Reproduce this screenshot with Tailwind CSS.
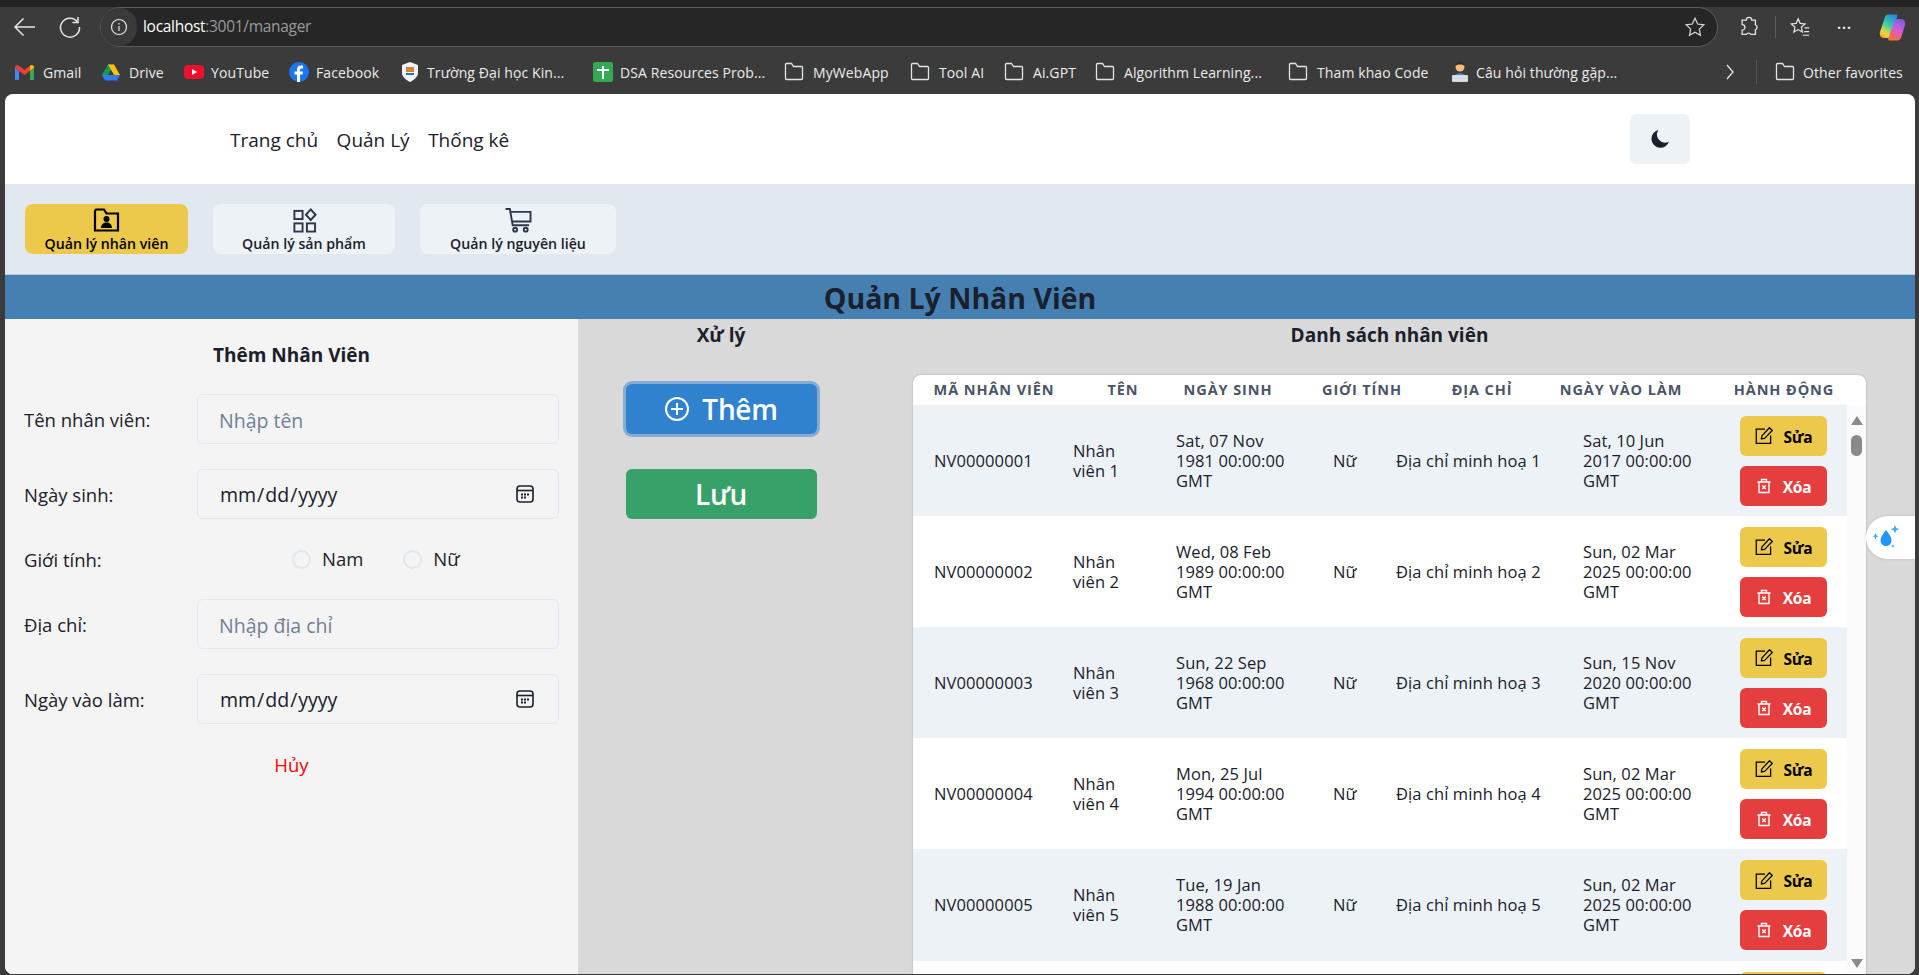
<!DOCTYPE html>
<html lang="vi">

<head>
  <meta charset="UTF-8" />
  <meta name="viewport" content="width=device-width, initial-scale=1.0" />
  <script src="https://cdn.jsdelivr.net/npm/@tailwindcss/browser@4"></script>
  <title>Quản lý nhân viên</title>
</head>

<body class="h-screen overflow-hidden bg-[#3b3b3b] font-['Open_Sans','Noto_Sans',sans-serif]">
  <!-- icon sheet -->
  <svg class="hidden">
    <symbol id="folder" viewBox="0 0 22 22">
      <path d="M2.500 6V3.500a1 1 0 0 1 1-1h5l2 3h8a1 1 0 0 1 1 1v11a1 1 0 0 1-1 1h-15a1 1 0 0 1-1-1z" fill="none" stroke="#e4e4e4" stroke-width="1.300" />
    </symbol>
    <symbol id="edit" viewBox="0 0 18 18">
      <path d="M9.500 3H1.200v13.500h13.600V9" fill="none" stroke="currentColor" stroke-width="1.200" />
      <path d="M6 12.300l.6-3L13.700 1.700l2.700 2.500-7.300 7.500z" fill="none" stroke="currentColor" stroke-width="1.200" stroke-linejoin="round" />
    </symbol>
    <symbol id="trash" viewBox="0 0 16 16">
      <path d="M1.500 4h13M5.500 4V1.500h5V4M3 4v10.500h10V4" fill="none" stroke="currentColor" stroke-width="1.400" />
      <path d="M6.300 7.500l3.400 3.400M9.700 7.500l-3.400 3.400" stroke="currentColor" stroke-width="1.400" />
    </symbol>
    <symbol id="calendar" viewBox="0 0 18 18">
      <rect x="1" y="1" width="16" height="16" rx="3" fill="none" stroke="#1a202c" stroke-width="1.600" />
      <path d="M1 5.500h16" stroke="#1a202c" stroke-width="1.600" />
      <path d="M5 8.500h2v2H5zM8 8.500h2v2H8zM11 8.500h2v2h-2zM5 11.500h2v2H5zM8 11.500h2v2H8z" fill="#1a202c" />
    </symbol>
  </svg>

  <!-- browser bar -->
  <header class="h-[94px] text-[#e8e8e8]">
    <div class="h-[7px] bg-[#232323]"></div>
    <div class="h-[40px] flex items-center">
      <div class="w-[100px] flex items-center pl-[13px] gap-[21px]">
        <svg class="w-[24px] h-[24px]" viewBox="0 0 24 24" fill="none" stroke="#e6e6e6" stroke-width="1.500">
          <path d="M22 12H2M10.500 3.500L2 12l8.500 8.500" />
        </svg>
        <svg class="w-[24px] h-[24px]" viewBox="0 0 24 24" fill="none" stroke="#e6e6e6" stroke-width="1.500">
          <path d="M19.500 6.800A9.500 9.500 0 1 0 21.500 12" />
          <path d="M20 2v5.500h-5.500" />
        </svg>
      </div>
      <div class="w-[1618px] h-[40px] rounded-full border border-[#5c5c5c] bg-[#262626] flex items-center relative">
        <div class="w-[36px] h-[38px] rounded-full bg-[#3a3a3a] flex items-center justify-center">
          <svg class="w-[18px] h-[18px]" viewBox="0 0 18 18" fill="none" stroke="#e6e6e6" stroke-width="1.200">
            <circle cx="9" cy="9" r="7.500" />
            <path d="M9 8v5M9 5v1.500" />
          </svg>
        </div>
        <div class="ml-[6px] text-[15.500px] tracking-[-0.3px]"><span class="text-white">localhost</span><span class="text-[#9a9a9a]">:3001/manager</span></div>
        <svg class="w-[22px] h-[22px] ml-auto mr-[11px]" viewBox="0 0 24 24" fill="none" stroke="#d6d6d6" stroke-width="1.300">
          <path d="M12 2.500l2.900 6.300 6.800.8-5 4.700 1.300 6.800-6-3.400-6 3.400 1.300-6.800-5-4.700 6.800-.8z" />
        </svg>
      </div>
      <div class="flex-1 flex items-center pl-[20px]">
        <svg class="w-[22px] h-[22px]" viewBox="0 0 24 24" fill="none" stroke="#e6e6e6" stroke-width="1.400">
          <path d="M9 4.500a3 3 0 0 1 6 0h4v5a3 3 0 0 1 0 5.500v5h-5a3 3 0 0 0-5 0H4.500v-4.500a3 3 0 0 0 0-6V4.500z" />
        </svg>
        <div class="w-px h-[22px] bg-[#5c5c5c] ml-[15px]"></div>
        <svg class="w-[22px] h-[22px] ml-[13px]" viewBox="0 0 24 24" fill="none" stroke="#e6e6e6" stroke-width="1.300">
          <path d="M10 3l2.200 5 5.300.6-4 3.600 1.100 5.300-4.600-2.700-4.600 2.700 1.100-5.300-4-3.600 5.300-.6z" />
          <path d="M17 13h5M16.500 17h5.500M15 21h7" />
        </svg>
        <div class="ml-[26px] text-[14px] font-bold leading-none tracking-[1px] -mt-[6px]">...</div>
        <svg class="w-[27px] h-[27px] ml-[27px]" viewBox="0 0 27 27">
          <defs>
            <linearGradient id="cp1" x1="0.7" y1="0" x2="0.2" y2="1">
              <stop offset="0" stop-color="#1f8de6" />
              <stop offset=".45" stop-color="#3fcf9a" />
              <stop offset=".8" stop-color="#f2d53c" />
              <stop offset="1" stop-color="#f2a93c" />
            </linearGradient>
            <linearGradient id="cp2" x1="0.7" y1="0" x2="0.3" y2="1">
              <stop offset="0" stop-color="#7a5ae8" />
              <stop offset=".5" stop-color="#d45fd0" />
              <stop offset=".8" stop-color="#f0607a" />
              <stop offset="1" stop-color="#f07a2c" />
            </linearGradient>
          </defs>
          <path d="M9 .5h8c1 0 1.500.8 1.200 1.800L13 21c-.6 2-2 3-4 3H5c-3 0-5-3-4-6L6 3c.4-1.500 1.500-2.500 3-2.500z" fill="url(#cp1)" />
          <path d="M19 5h3c3 0 5 3 4 6l-4 13c-.5 1.500-2 2.500-3.500 2.500h-8c-1 0-1.500-.8-1.200-1.800L15 8c.5-2 2-3 4-3z" fill="url(#cp2)" />
        </svg>
      </div>
    </div>
    <div class="h-[47px] flex items-center pt-[3px] text-[14px] tracking-[0.1px] text-[#ececec] pl-[15px] whitespace-nowrap">
      <a class="w-[87px] flex items-center gap-[9px]">
        <svg class="w-[19px] h-[15px] shrink-0" viewBox="0 0 19 15">
          <path d="M0 2.500V15h4V6z" fill="#4285f4" />
          <path d="M15 6v9h4V2.500z" fill="#34a853" />
          <path d="M0 2.500C0 .3 2.500-.6 4 .7L9.500 5 15 .7c1.500-1.300 4-.4 4 1.800L15 6 9.500 10 4 6z" fill="#ea4335" />
          <path d="M15 .7c1.500-1.300 4-.4 4 1.800L15 6z" fill="#fbbc04" />
        </svg>
        Gmail
      </a>
      <a class="w-[82px] flex items-center gap-[9px]">
        <svg class="w-[18px] h-[17px] shrink-0" viewBox="0 0 18 16">
          <path d="M6 0h6l-6 10.500H0z" fill="#0f9d58" />
          <path d="M12 0l6 10.500h-6L6 0z" fill="#ffc107" />
          <path d="M0 10.500h18L15 16H3z" fill="#2f7bf0" />
        </svg>
        Drive
      </a>
      <a class="w-[105px] flex items-center gap-[7px]">
        <svg class="w-[20px] h-[14px] shrink-0" viewBox="0 0 20 14">
          <rect width="20" height="14" rx="4" fill="#f00f2f" />
          <path d="M8 4l5 3-5 3z" fill="#fff" />
        </svg>
        YouTube
      </a>
      <a class="w-[113px] flex items-center gap-[7px]">
        <svg class="w-[20px] h-[20px] shrink-0" viewBox="0 0 20 20">
          <circle cx="10" cy="10" r="10" fill="#1877f2" />
          <path d="M11 20v-7.500h2.500L14 9.500h-3V8c0-1 .5-1.600 1.700-1.600H14V3.700c-.7-.1-1.400-.2-2-.2-2.400 0-4 1.400-4 4v2H5.500v3H8V20z" fill="#fff" />
        </svg>
        Facebook
      </a>
      <a class="w-[191px] flex items-center gap-[10px]">
        <svg class="w-[16px] h-[20px] -mr-[1px] shrink-0" viewBox="0 0 16 20">
          <path d="M8 0l8 3v8c0 4-4 7-8 9-4-2-8-5-8-9V3z" fill="#eef3fa" />
          <rect x="4" y="5" width="8" height="5" fill="#d9812e" />
          <rect x="4" y="11" width="8" height="2" fill="#2d6fb5" />
        </svg>
        Trường Đại học Kin...
      </a>
      <a class="w-[189.500px] flex items-center gap-[7px]">
        <svg class="w-[20px] h-[20px] shrink-0" viewBox="0 0 20 20">
          <rect width="20" height="20" rx="2" fill="#34a853" />
          <path d="M9 4h2v3h5v2h-5v8H9V9H4V7h5z" fill="#fff" />
        </svg>
        DSA Resources Prob...
      </a>
      <a class="w-[126px] flex items-center gap-[8.500px]"><svg class="w-[22px] h-[22px] shrink-0"><use href="#folder" /></svg>MyWebApp</a>
      <a class="w-[94px] flex items-center gap-[8.500px]"><svg class="w-[22px] h-[22px] shrink-0"><use href="#folder" /></svg>Tool AI</a>
      <a class="w-[91px] flex items-center gap-[8.500px]"><svg class="w-[22px] h-[22px] shrink-0"><use href="#folder" /></svg>Ai.GPT</a>
      <a class="w-[193px] flex items-center gap-[8.500px]"><svg class="w-[22px] h-[22px] shrink-0"><use href="#folder" /></svg>Algorithm Learning...</a>
      <a class="w-[163.500px] flex items-center gap-[8.500px]"><svg class="w-[22px] h-[22px] shrink-0"><use href="#folder" /></svg>Tham khao Code</a>
      <a class="w-[276px] flex items-center gap-[6px]">
        <svg class="w-[20px] h-[22px] shrink-0" viewBox="0 0 20 22">
          <circle cx="10" cy="6" r="4.500" fill="#f4bd7e" />
          <path d="M5.500 5c0-3 2-4.500 4.500-4.500S14.500 2 14.500 5c-1-1-2-1.500-4.500-1.500S6.500 4 5.500 5z" fill="#3a2a1f" />
          <path d="M3 20c0-5 3-8 7-8s7 3 7 8z" fill="#4a7fc1" />
          <rect x="2" y="14" width="16" height="7" rx="1" fill="#d8dde3" />
        </svg>
        Câu hỏi thường gặp...
      </a>
      <svg class="w-[10px] h-[16px] -ml-[1px]" viewBox="0 0 10 16" fill="none" stroke="#e6e6e6" stroke-width="1.300"><path d="M2 1l6 7-6 7" /></svg>
      <div class="w-px h-[24px] bg-[#555] ml-[21px]"></div>
      <a class="ml-[17px] flex items-center gap-[7px]"><svg class="w-[22px] h-[22px] shrink-0"><use href="#folder" /></svg>Other favorites</a>
    </div>
  </header>

  <!-- page -->
  <div class="ml-[5px] w-[1910px] h-[880px] bg-white rounded-[8px] overflow-hidden text-[#1a202c] relative">
    <nav class="h-[90px] flex items-center pt-[2px] pl-[225px] pr-[225px] text-[19px] gap-[18.500px]">
      <a>Trang chủ</a>
      <a>Quản Lý</a>
      <a>Thống kê</a>
      <button class="ml-auto w-[60px] h-[50px] -mt-[2px] rounded-[6px] bg-[#edf2f7] flex items-center justify-center">
        <svg class="w-[20px] h-[20px]" viewBox="0 0 20 20">
          <path d="M8.500 1a9 9 0 1 0 10.500 11.500A8 8 0 0 1 8.500 1z" fill="#1a202c" />
        </svg>
      </button>
    </nav>

    <div class="h-[91px] bg-[#e2e8f0] border-b border-[#c4cad2] flex items-start pt-[20px] pl-[20px] gap-[25px] text-[14.200px] font-semibold">
      <button class="w-[163px] h-[50px] rounded-[8px] bg-[#ecc94b] text-black flex flex-col items-center">
        <svg class="w-[27px] h-[27px] mt-[3px] mb-[1px]" viewBox="0 0 26 26">
          <path d="M1.500 4V23.500h23V6.500H13L10.500 2.500h-8z" fill="none" stroke="#000" stroke-width="2.200" />
          <circle cx="13" cy="12" r="3" />
          <path d="M7.500 21c0-3.500 2.500-5.500 5.500-5.500s5.500 2 5.500 5.500z" />
        </svg>
        <span class="leading-[20px]">Quản lý nhân viên</span>
      </button>
      <button class="w-[182px] h-[50px] rounded-[8px] bg-[#edf2f7] flex flex-col items-center">
        <svg class="w-[25px] h-[26px] mt-[4px] mb-[1px]" viewBox="0 0 25 26" fill="none" stroke="#2d3748" stroke-width="2">
          <rect x="2" y="3" width="8.500" height="8.500" />
          <rect x="2" y="16" width="8.500" height="8.500" />
          <rect x="15" y="16" width="8.500" height="8.500" />
          <path d="M19 1.500l5 5.500-5 5.500-5-5.500z" />
        </svg>
        <span class="leading-[20px]">Quản lý sản phẩm</span>
      </button>
      <button class="w-[196px] h-[50px] rounded-[8px] bg-[#edf2f7] flex flex-col items-center">
        <svg class="w-[27px] h-[26px] mt-[4px] mb-[1px]" viewBox="0 0 27 26" fill="none" stroke="#2d3748" stroke-width="2">
          <path d="M0 1h4.500l3 17h17" />
          <path d="M5.500 4H26v10H7" />
          <circle cx="10" cy="22.500" r="2" />
          <circle cx="21" cy="22.500" r="2" />
        </svg>
        <span class="leading-[20px]">Quản lý nguyên liệu</span>
      </button>
    </div>

    <h1 class="h-[44px] bg-[#4680b3] text-center text-[28.500px] font-bold leading-[46px]">Quản Lý Nhân Viên</h1>

    <div class="flex h-[655px] bg-[#d9d9d9]">
      <!-- form -->
      <section class="w-[573px] shrink-0 bg-[#f4f4f4] pl-[19px] pr-[19px] text-[18.500px]">
        <h2 class="text-center text-[19px] font-bold pt-[24px] leading-[24px]">Thêm Nhân Viên</h2>
        <label class="flex items-center mt-[27px]">
          <span class="w-[173px] shrink-0 pt-[2px]">Tên nhân viên:</span>
          <input type="text" placeholder="Nhập tên" class="flex-1 min-w-0 h-[50px] pt-[2px] rounded-[6px] border border-[#e2e8f0] px-[21px] text-[19.500px] placeholder:text-[#718096]" />
        </label>
        <label class="flex items-center mt-[25px]">
          <span class="w-[173px] shrink-0 pt-[2px]">Ngày sinh:</span>
          <span class="relative flex-1 min-w-0 flex">
            <input type="date" class="w-full h-[50px] pt-[2px] rounded-[6px] border border-[#e2e8f0] px-[21px] text-[19.500px] [&::-webkit-calendar-picker-indicator]:opacity-0" />
            <svg class="absolute right-[25px] top-[16px] w-[18px] h-[18px] pointer-events-none"><use href="#calendar" /></svg>
          </span>
        </label>
        <div class="flex items-center mt-[15px] h-[50px]">
          <span class="w-[268px] shrink-0 pt-[2px]">Giới tính:</span>
          <label class="flex items-center"><input type="radio" name="gender" class="appearance-none w-[19px] h-[19px] rounded-full border-2 border-[#e2e8f0] mr-[11px]" />Nam</label>
          <label class="flex items-center ml-[40px]"><input type="radio" name="gender" class="appearance-none w-[19px] h-[19px] rounded-full border-2 border-[#e2e8f0] mr-[11px]" />Nữ</label>
        </div>
        <label class="flex items-center mt-[15px]">
          <span class="w-[173px] shrink-0 pt-[2px]">Địa chỉ:</span>
          <input type="text" placeholder="Nhập địa chỉ" class="flex-1 min-w-0 h-[50px] pt-[2px] rounded-[6px] border border-[#e2e8f0] px-[21px] text-[19.500px] placeholder:text-[#718096]" />
        </label>
        <label class="flex items-center mt-[25px]">
          <span class="w-[173px] shrink-0 pt-[2px]">Ngày vào làm:</span>
          <span class="relative flex-1 min-w-0 flex">
            <input type="date" class="w-full h-[50px] pt-[2px] rounded-[6px] border border-[#e2e8f0] px-[21px] text-[19.500px] [&::-webkit-calendar-picker-indicator]:opacity-0" />
            <svg class="absolute right-[25px] top-[16px] w-[18px] h-[18px] pointer-events-none"><use href="#calendar" /></svg>
          </span>
        </label>
        <div class="text-center text-[#ff0000] mt-[29px] leading-[24px]">Hủy</div>
      </section>

      <!-- actions -->
      <section class="w-[288px] shrink-0 pr-[2px] flex flex-col items-center">
        <h2 class="text-[19px] font-bold leading-[24px] pt-[4px] h-[30px] box-content">Xử lý</h2>
        <button class="mt-[31px] w-[191px] h-[50px] rounded-[6px] bg-[#3182ce] ring-[3px] ring-[#3182ce]/50 text-white text-[28px] font-semibold flex items-center justify-center gap-[12px] tracking-[-0.3px]">
          <svg class="w-[26px] h-[26px]" viewBox="0 0 26 26" fill="none" stroke="#fff" stroke-width="2">
            <circle cx="13" cy="13" r="11" />
            <path d="M13 7v12M7 13h12" />
          </svg>
          Thêm
        </button>
        <button class="mt-[35px] w-[191px] h-[50px] rounded-[6px] bg-[#38a169] text-white text-[28px] font-semibold tracking-[-0.3px]">Lưu</button>
      </section>

      <!-- list -->
      <section class="flex-1 min-w-0 pl-[47px] pr-[49px]">
        <h2 class="text-center text-[19px] font-bold leading-[24px] pt-[4px] h-[56px]">Danh sách nhân viên</h2>
        <div class="bg-white rounded-t-[8px] shadow-[0_0_2px_rgba(0,0,0,0.25)] h-[620px] overflow-hidden">
          <div class="h-[30px] grid grid-cols-[162px_96px_114px_154px_86px_192px_134px] items-center text-center text-[14.500px] font-bold tracking-[0.9px] text-[#4a5568] uppercase whitespace-nowrap">
            <span>Mã nhân viên</span>
            <span>Tên</span>
            <span>Ngày sinh</span>
            <span>Giới tính</span>
            <span>Địa chỉ</span>
            <span>Ngày vào làm</span>
            <span>Hành động</span>
          </div>
          <div class="flex">
            <div class="w-[934px] shrink-0 text-[16.500px] leading-[20px] tracking-[0.1px]">
              <div class="h-[111px] bg-[#edf2f7] grid grid-cols-[144px_103px_157px_63px_187px_157px_123px] items-center">
                <span class="pl-[21px]">NV00000001</span>
                <span class="pl-[16px]">Nhân<br />viên 1</span>
                <span class="pl-[16px] whitespace-nowrap">Sat, 07 Nov<br />1981 00:00:00<br />GMT</span>
                <span class="pl-[16px]">Nữ</span>
                <span class="pl-[16px] whitespace-nowrap">Địa chỉ minh hoạ 1</span>
                <span class="pl-[16px] whitespace-nowrap">Sat, 10 Jun<br />2017 00:00:00<br />GMT</span>
                <span class="pl-[16px] flex flex-col gap-[10px]">
                  <button class="w-[87px] h-[40px] rounded-[6px] bg-[#ecc94b] text-black text-[15.500px] tracking-[-0.25px] font-bold flex items-center justify-center gap-[10px]"><svg class="w-[19px] h-[19px]"><use href="#edit" /></svg><span class="pt-[2px]">Sửa</span></button>
                  <button class="w-[87px] h-[40px] rounded-[6px] bg-[#e53e3e] text-white text-[15.500px] tracking-[-0.25px] font-bold flex items-center justify-center gap-[11px]"><svg class="w-[16px] h-[16px]"><use href="#trash" /></svg><span class="pt-[2px]">Xóa</span></button>
                </span>
              </div>
              <div class="h-[111px] bg-white grid grid-cols-[144px_103px_157px_63px_187px_157px_123px] items-center">
                <span class="pl-[21px]">NV00000002</span>
                <span class="pl-[16px]">Nhân<br />viên 2</span>
                <span class="pl-[16px] whitespace-nowrap">Wed, 08 Feb<br />1989 00:00:00<br />GMT</span>
                <span class="pl-[16px]">Nữ</span>
                <span class="pl-[16px] whitespace-nowrap">Địa chỉ minh hoạ 2</span>
                <span class="pl-[16px] whitespace-nowrap">Sun, 02 Mar<br />2025 00:00:00<br />GMT</span>
                <span class="pl-[16px] flex flex-col gap-[10px]">
                  <button class="w-[87px] h-[40px] rounded-[6px] bg-[#ecc94b] text-black text-[15.500px] tracking-[-0.25px] font-bold flex items-center justify-center gap-[10px]"><svg class="w-[19px] h-[19px]"><use href="#edit" /></svg><span class="pt-[2px]">Sửa</span></button>
                  <button class="w-[87px] h-[40px] rounded-[6px] bg-[#e53e3e] text-white text-[15.500px] tracking-[-0.25px] font-bold flex items-center justify-center gap-[11px]"><svg class="w-[16px] h-[16px]"><use href="#trash" /></svg><span class="pt-[2px]">Xóa</span></button>
                </span>
              </div>
              <div class="h-[111px] bg-[#edf2f7] grid grid-cols-[144px_103px_157px_63px_187px_157px_123px] items-center">
                <span class="pl-[21px]">NV00000003</span>
                <span class="pl-[16px]">Nhân<br />viên 3</span>
                <span class="pl-[16px] whitespace-nowrap">Sun, 22 Sep<br />1968 00:00:00<br />GMT</span>
                <span class="pl-[16px]">Nữ</span>
                <span class="pl-[16px] whitespace-nowrap">Địa chỉ minh hoạ 3</span>
                <span class="pl-[16px] whitespace-nowrap">Sun, 15 Nov<br />2020 00:00:00<br />GMT</span>
                <span class="pl-[16px] flex flex-col gap-[10px]">
                  <button class="w-[87px] h-[40px] rounded-[6px] bg-[#ecc94b] text-black text-[15.500px] tracking-[-0.25px] font-bold flex items-center justify-center gap-[10px]"><svg class="w-[19px] h-[19px]"><use href="#edit" /></svg><span class="pt-[2px]">Sửa</span></button>
                  <button class="w-[87px] h-[40px] rounded-[6px] bg-[#e53e3e] text-white text-[15.500px] tracking-[-0.25px] font-bold flex items-center justify-center gap-[11px]"><svg class="w-[16px] h-[16px]"><use href="#trash" /></svg><span class="pt-[2px]">Xóa</span></button>
                </span>
              </div>
              <div class="h-[111px] bg-white grid grid-cols-[144px_103px_157px_63px_187px_157px_123px] items-center">
                <span class="pl-[21px]">NV00000004</span>
                <span class="pl-[16px]">Nhân<br />viên 4</span>
                <span class="pl-[16px] whitespace-nowrap">Mon, 25 Jul<br />1994 00:00:00<br />GMT</span>
                <span class="pl-[16px]">Nữ</span>
                <span class="pl-[16px] whitespace-nowrap">Địa chỉ minh hoạ 4</span>
                <span class="pl-[16px] whitespace-nowrap">Sun, 02 Mar<br />2025 00:00:00<br />GMT</span>
                <span class="pl-[16px] flex flex-col gap-[10px]">
                  <button class="w-[87px] h-[40px] rounded-[6px] bg-[#ecc94b] text-black text-[15.500px] tracking-[-0.25px] font-bold flex items-center justify-center gap-[10px]"><svg class="w-[19px] h-[19px]"><use href="#edit" /></svg><span class="pt-[2px]">Sửa</span></button>
                  <button class="w-[87px] h-[40px] rounded-[6px] bg-[#e53e3e] text-white text-[15.500px] tracking-[-0.25px] font-bold flex items-center justify-center gap-[11px]"><svg class="w-[16px] h-[16px]"><use href="#trash" /></svg><span class="pt-[2px]">Xóa</span></button>
                </span>
              </div>
              <div class="h-[112px] bg-[#edf2f7] grid grid-cols-[144px_103px_157px_63px_187px_157px_123px] items-center">
                <span class="pl-[21px]">NV00000005</span>
                <span class="pl-[16px]">Nhân<br />viên 5</span>
                <span class="pl-[16px] whitespace-nowrap">Tue, 19 Jan<br />1988 00:00:00<br />GMT</span>
                <span class="pl-[16px]">Nữ</span>
                <span class="pl-[16px] whitespace-nowrap">Địa chỉ minh hoạ 5</span>
                <span class="pl-[16px] whitespace-nowrap">Sun, 02 Mar<br />2025 00:00:00<br />GMT</span>
                <span class="pl-[16px] flex flex-col gap-[10px]">
                  <button class="w-[87px] h-[40px] rounded-[6px] bg-[#ecc94b] text-black text-[15.500px] tracking-[-0.25px] font-bold flex items-center justify-center gap-[10px]"><svg class="w-[19px] h-[19px]"><use href="#edit" /></svg><span class="pt-[2px]">Sửa</span></button>
                  <button class="w-[87px] h-[40px] rounded-[6px] bg-[#e53e3e] text-white text-[15.500px] tracking-[-0.25px] font-bold flex items-center justify-center gap-[11px]"><svg class="w-[16px] h-[16px]"><use href="#trash" /></svg><span class="pt-[2px]">Xóa</span></button>
                </span>
              </div>
              <!-- next row only peeks in above the fold -->
              <div class="h-[111px] bg-white pl-[827px] pt-[11px]">
                <div class="w-[87px] h-[40px] rounded-[6px] bg-[#ecc94b]"></div>
              </div>
            </div>
            <!-- scrollbar -->
            <div class="flex-1 bg-[#fbfbfb] flex flex-col items-center pt-[11px]">
              <div class="w-0 h-0 border-x-[6px] border-x-transparent border-b-[9px] border-b-[#8a8a8a]"></div>
              <div class="w-[11px] h-[21px] rounded-full bg-[#8a8a8a] mt-[10px]"></div>
              <div class="w-0 h-0 border-x-[6px] border-x-transparent border-t-[9px] border-t-[#8a8a8a] mt-[503px]"></div>
            </div>
          </div>
        </div>
      </section>
    </div>

    <!-- floating extension tab, sits over the page edge -->
    <div class="absolute right-0 top-[422px] w-[49px] h-[43px] bg-white rounded-l-full shadow-[0_0_3px_rgba(0,0,0,0.15)] flex items-center pl-[5px]">
      <svg class="w-[30px] h-[26px]" viewBox="0 0 30 26" fill="#2196f3">
        <path d="M15 5c3 4 5.500 7 5.500 10.500a5.500 5.500 0 0 1-11 0C9.500 12 12 9 15 5z" />
        <path d="M24 0l1.200 3 3 1.200-3 1.200L24 8.500l-1.200-3-3-1.200 3-1.200zM4.500 8l.9 2.300 2.300.9-2.300.9-.9 2.300-.9-2.300-2.300-.9 2.300-.9zM22 19l.6 1.400 1.400.6-1.400.6-.6 1.400-.6-1.400-1.400-.6 1.400-.6z" fill="#4aa8ee" />
      </svg>
    </div>
  </div>
</body>

</html>
